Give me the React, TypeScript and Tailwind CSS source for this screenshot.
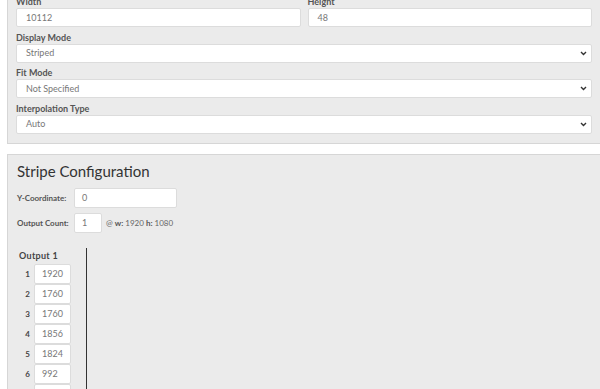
import React from 'react';

const FONT = { fontFamily: 'Lato, "Open Sans", "DejaVu Sans", sans-serif' };

const Chevron = () => (
  <svg width="7" height="5" viewBox="0 0 7 5" className="text-[#333]">
    <path d="M1 1 L3.5 3.5 L6 1" fill="none" stroke="currentColor" strokeWidth="1.4" />
  </svg>
);

const Field: React.FC<{ label: string; value: string; select?: boolean }> = ({ label, value, select }) => (
  <div className="flex flex-col">
    <div className="h-[12px] leading-[12px] text-[9px] font-bold text-[#555]">{label}</div>
    <div className="h-[19px] bg-white border border-[#dcdcdc] rounded-[2px] flex items-center justify-between pl-[9px] pr-[4px] text-[9px] text-[#777]">
      <span>{value}</span>
      {select && <Chevron />}
    </div>
  </div>
);

const SmallInput: React.FC<{ value: string; w: string }> = ({ value, w }) => (
  <div className={`${w} h-[20px] bg-white border border-[#dcdcdc] rounded-[2px] flex items-center pl-[7px] text-[9px] text-[#777]`}>
    {value}
  </div>
);

const outputs = ['1920', '1760', '1760', '1856', '1824', '992', ''];

export default function App() {
  return (
    <div className="w-[600px] h-[389px] overflow-hidden bg-white" style={FONT}>
      <div className="pl-[7px] -mt-[4px]">
        <div className="bg-[#ebebeb] border-l border-b border-[#d6d6d6] px-[8px] pb-[9px] flex flex-col gap-[4.5px]">
          <div className="grid grid-cols-2 gap-[7px]">
            <Field label="Width" value="10112" />
            <Field label="Height" value="48" />
          </div>
          <Field label="Display Mode" value="Striped" select />
          <Field label="Fit Mode" value="Not Specified" select />
          <Field label="Interpolation Type" value="Auto" select />
        </div>
      </div>

      <div className="pl-[7px] mt-[10px]">
        <div className="bg-[#ebebeb] border-l border-t border-[#d6d6d6] pl-[9px] pt-[6px] h-[260px]">
          <div className="text-[15px] text-[#333] leading-[20px]">Stripe Configuration</div>
          <div className="flex items-center mt-[7px]">
            <div className="w-[57px] text-[8px] font-bold text-[#555]">Y-Coordinate:</div>
            <SmallInput value="0" w="w-[103px]" />
          </div>
          <div className="flex items-center mt-[5px]">
            <div className="w-[57px] text-[8px] font-bold text-[#555]">Output Count:</div>
            <SmallInput value="1" w="w-[28px]" />
            <div className="ml-[4px] text-[8px] text-[#666]">
              @ <b className="text-[#555]">w:</b> 1920 <b className="text-[#555]">h:</b> 1080
            </div>
          </div>
          <div className="flex mt-[15px]">
            <div className="w-[69px] pl-[2px] pt-[2px]">
              <div className="text-[9px] font-bold text-[#444] h-[12px] leading-[12px] mb-[2px] tracking-[0.3px]">Output 1</div>
              <div className="flex flex-col">
                {outputs.map((v, i) => (
                  <div key={i} className="flex items-center h-[20px]">
                    <div className="w-[15px] text-right pr-[4px] text-[8px] font-bold text-[#444]">{i + 1}</div>
                    <SmallInput value={v} w="w-[37px]" />
                  </div>
                ))}
              </div>
            </div>
            <div className="w-px bg-[#333] h-[150px]" />
          </div>
        </div>
      </div>
    </div>
  );
}
